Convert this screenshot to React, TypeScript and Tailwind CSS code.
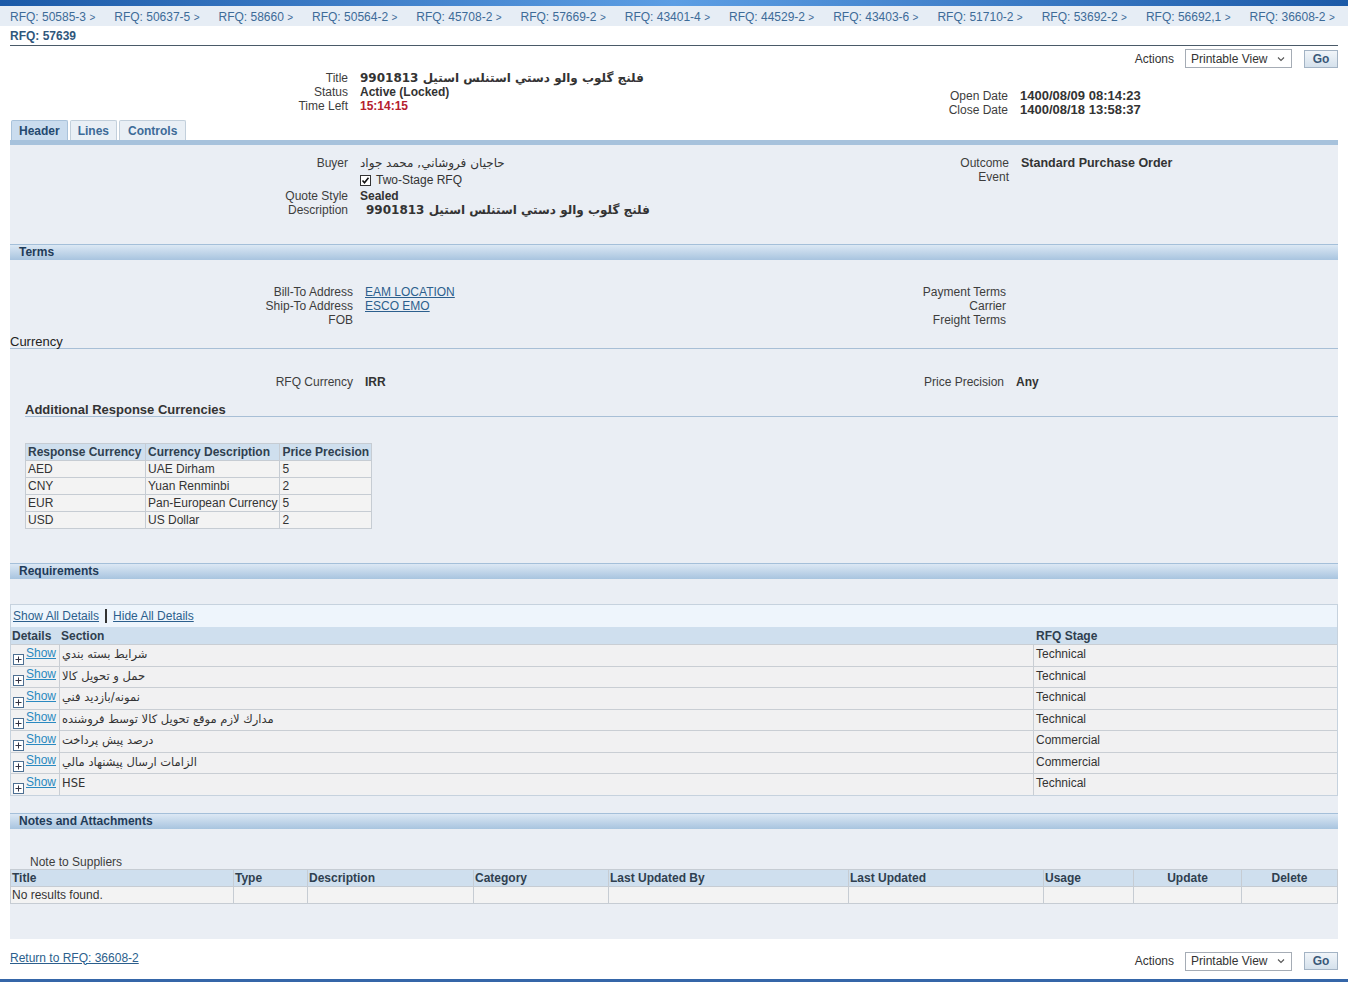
import React from 'react';

const crumbs = [
  '50585-3', '50637-5', '58660', '50564-2', '45708-2', '57669-2', '43401-4',
  '44529-2', '43403-6', '51710-2', '53692-2', '56692,1', '36608-2',
];

const currencies = [
  ['AED', 'UAE Dirham', '5'],
  ['CNY', 'Yuan Renminbi', '2'],
  ['EUR', 'Pan-European Currency', '5'],
  ['USD', 'US Dollar', '2'],
];

const reqs = [
  ['شرايط بسته بندي', 'Technical'],
  ['حمل و تحويل كالا', 'Technical'],
  ['نمونه/بازديد فني', 'Technical'],
  ['مدارك لازم موقع تحويل كالا توسط فروشنده', 'Technical'],
  ['درصد پيش پرداخت', 'Commercial'],
  ['الزامات ارسال پيشنهاد مالي', 'Commercial'],
  ['HSE', 'Technical'],
];

const Field = ({ label, w, children }: { label: string; w: string; children?: React.ReactNode }) => (
  <div className="flex h-[14px] items-center leading-[14px]">
    <div className={`${w} shrink-0 text-right text-[#3d3d3d]`}>{label}</div>
    <div className="whitespace-nowrap pl-[12px] text-[#333]">{children}</div>
  </div>
);

const SectionBar = ({ title }: { title: string }) => (
  <div className="h-[16px] border-t border-[#a4bfd9] bg-gradient-to-b from-[#dce8f4] to-[#a8c4df] pl-[9px] text-[12px] font-bold leading-[15px] text-[#1f3b58]">
    {title}
  </div>
);

const Actions = () => (
  <div className="flex items-center">
    <span className="mr-[11px] text-[#333]">Actions</span>
    <div className="flex h-[19px] w-[107px] items-center justify-between border border-[#a5acb5] bg-white pl-[5px] pr-[6px] text-[#333]">
      <span>Printable View</span>
      <svg width="8" height="6" viewBox="0 0 8 6"><path d="M1 1.5 L4 4.5 L7 1.5" fill="none" stroke="#555" strokeWidth="1.1" /></svg>
    </div>
    <div className="ml-[12px] flex h-[18px] w-[34px] items-center justify-center border border-[#a3b3c4] bg-gradient-to-b from-[#f1f5f9] to-[#d5e1ec] font-bold text-[#3a5878]">
      Go
    </div>
  </div>
);

const cell = 'border border-[#c6ccd3] px-[2px] whitespace-nowrap';

export default function App() {
  return (
    <div className="relative h-[982px] w-[1348px] overflow-hidden bg-white font-['Liberation_Sans','DejaVu_Sans',Arial,sans-serif] text-[12px] text-[#333]">
      {/* bandeau bleu */}
      <div className="h-[6px] bg-gradient-to-r from-[#1b5aa8] via-[#5c9ee4] to-[#1b5aa8]" />

      {/* fil d'ariane */}
      <div className="flex h-[20px] items-center gap-[19px] bg-[#e6edf5] pl-[10px] pt-[2px] text-[#3d6b98]">
        {crumbs.map((c) => (
          <span key={c} className="whitespace-nowrap">
            RFQ: {c} <span className="text-[10px]">&gt;</span>
          </span>
        ))}
      </div>

      <div className="mx-[10px] border-b border-[#4a5a68] pb-[2px] pt-[3px] text-[12px] font-bold leading-[14px] text-[#30577c]">
        RFQ: 57639
      </div>

      <div className="mx-[10px] flex justify-end pt-[3px]">
        <Actions />
      </div>

      {/* titre */}
      <div className="mx-[10px] mt-[3px] flex">
        <div className="w-[900px]">
          <Field label="Title" w="w-[338px]">
            <span className="font-['DejaVu_Sans',sans-serif] text-[12px] font-bold">فلنج گلوب والو دستي استنلس استيل 9901813</span>
          </Field>
          <Field label="Status" w="w-[338px]"><b>Active (Locked)</b></Field>
          <Field label="Time Left" w="w-[338px]"><b className="text-[#b5202e]">15:14:15</b></Field>
        </div>
        <div className="pt-[18px]">
          <Field label="Open Date" w="w-[98px]"><b className="text-[13px]">1400/08/09 08:14:23</b></Field>
          <Field label="Close Date" w="w-[98px]"><b className="text-[13px]">1400/08/18 13:58:37</b></Field>
        </div>
      </div>

      {/* onglets */}
      <div className="mx-[10px] mt-[3px] flex h-[20px] items-end gap-[2px] pl-[1px] font-bold">
        <div className="flex h-[20px] items-center rounded-t-[2px] border border-b-0 border-[#a9c2da] bg-[#cadcee] px-[7px] text-[#24496f]">Header</div>
        <div className="flex h-[20px] items-center rounded-t-[2px] border border-b-0 border-[#c2cfdb] bg-[#e9eff5] px-[7px] text-[#3d6b98]">Lines</div>
        <div className="flex h-[20px] items-center rounded-t-[2px] border border-b-0 border-[#c2cfdb] bg-[#e9eff5] px-[8px] text-[#3d6b98]">Controls</div>
      </div>
      <div className="mx-[10px] h-[5px] bg-[#a7c2dc]" />

      {/* panneau */}
      <div className="mx-[10px] bg-[#eaeef4] pb-[35px]">
        {/* en-tete */}
        <div className="flex pt-[11px]">
          <div className="w-[900px]">
            <Field label="Buyer" w="w-[338px]">
              <span className="font-['DejaVu_Sans',sans-serif]">حاجيان فروشاني, محمد جواد</span>
            </Field>
            <div className="flex h-[19px] items-end pl-[350px]">
              <div className="flex items-center gap-[5px]">
                <svg width="11" height="11" viewBox="0 0 11 11">
                  <rect x="0.5" y="0.5" width="10" height="10" fill="white" stroke="#333" />
                  <path d="M2.5 5.5 L4.5 7.8 L8.5 2.8" fill="none" stroke="#111" strokeWidth="1.6" />
                </svg>
                <span>Two-Stage RFQ</span>
              </div>
            </div>
            <Field label="Quote Style" w="w-[338px]"><b>Sealed</b></Field>
            <Field label="Description" w="w-[338px]">
              <span className="pl-[6px] font-['DejaVu_Sans',sans-serif] font-bold">فلنج گلوب والو دستي استنلس استيل 9901813</span>
            </Field>
          </div>
          <div>
            <Field label="Outcome" w="w-[99px]"><b className="text-[12.5px]">Standard Purchase Order</b></Field>
            <Field label="Event" w="w-[99px]" />
          </div>
        </div>

        {/* Terms */}
        <div className="mt-[27px]"><SectionBar title="Terms" /></div>
        <div className="flex pt-[25px]">
          <div className="w-[900px]">
            <Field label="Bill-To Address" w="w-[343px]"><span className="text-[#2c5f8d] underline">EAM LOCATION</span></Field>
            <Field label="Ship-To Address" w="w-[343px]"><span className="text-[#2c5f8d] underline">ESCO EMO</span></Field>
            <Field label="FOB" w="w-[343px]" />
          </div>
          <div>
            <Field label="Payment Terms" w="w-[96px]" />
            <Field label="Carrier" w="w-[96px]" />
            <Field label="Freight Terms" w="w-[96px]" />
          </div>
        </div>

        {/* Currency */}
        <div className="mt-[9px] border-b border-[#a8bfd6] text-[13px] leading-[12px] text-[#222]">Currency</div>
        <div className="flex pt-[26px]">
          <div className="w-[900px]">
            <Field label="RFQ Currency" w="w-[343px]"><b>IRR</b></Field>
          </div>
          <div>
            <Field label="Price Precision" w="w-[94px]"><b>Any</b></Field>
          </div>
        </div>
        <div className="ml-[15px] mt-[14px] border-b border-[#a8bfd6] text-[13px] font-bold leading-[13px] text-[#333]">
          Additional Response Currencies
        </div>

        <table className="ml-[15px] mt-[26px] border-collapse border border-[#c6ccd3] leading-[16px]">
          <thead>
            <tr className="bg-[#cfdfee] text-left text-[#2f3f50]">
              <th className={`${cell} w-[120px] font-bold`}>Response Currency</th>
              <th className={`${cell} w-[131px] font-bold`}>Currency Description</th>
              <th className={`${cell} w-[90px] font-bold`}>Price Precision</th>
            </tr>
          </thead>
          <tbody>
            {currencies.map((r) => (
              <tr key={r[0]} className="bg-[#f3f3f3]">
                {r.map((c, i) => (
                  <td key={i} className={cell}>{c}</td>
                ))}
              </tr>
            ))}
          </tbody>
        </table>

        {/* Requirements */}
        <div className="mt-[34px]"><SectionBar title="Requirements" /></div>
        <div className="mt-[25px] border border-[#c6d2de]">
          <div className="flex h-[22px] items-center bg-[#eef5fc] pl-[2px]">
            <span className="text-[#2c5f8d] underline">Show All Details</span>
            <span className="mx-[6px] h-[14px] w-[2px] bg-[#333]" />
            <span className="text-[#2c5f8d] underline">Hide All Details</span>
          </div>
          <div className="flex h-[17px] items-center bg-[#cfdfee] font-bold text-[#2f3f50]">
            <div className="w-[49px] pl-[1px]">Details</div>
            <div className="w-[974px] pl-[1px]">Section</div>
            <div className="pl-[2px]">RFQ Stage</div>
          </div>
          {reqs.map(([s, st], i) => (
            <div key={i} className="flex h-[21.5px] border-t border-[#c9ced4] bg-[#f1f1f2]">
              <div className="flex w-[49px] items-end gap-[2px] border-r border-[#c9ced4] pb-[2px] pl-[2px]">
                <svg width="11" height="11" viewBox="0 0 11 11" className="mb-[-1px]">
                  <rect x="0.5" y="0.5" width="10" height="10" fill="white" stroke="#4d6f92" />
                  <path d="M2.5 5.5 H8.5 M5.5 2.5 V8.5" stroke="#334" strokeWidth="1" />
                </svg>
                <span className="mb-[4px] leading-[14px] text-[#2a89c0] underline">Show</span>
              </div>
              <div className="w-[974px] border-r border-[#c9ced4] pl-[2px] pt-[2px] leading-[14px]">
                <span className="font-['DejaVu_Sans',sans-serif] text-[11.5px]">{s}</span>
              </div>
              <div className="pl-[2px] pt-[2px] leading-[14px]">{st}</div>
            </div>
          ))}
        </div>

        {/* Notes */}
        <div className="mt-[17px]"><SectionBar title="Notes and Attachments" /></div>
        <div className="mt-[26px] pl-[20px] leading-[14px] text-[#3d3d3d]">Note to Suppliers</div>
        <table className="w-full table-fixed border-collapse border border-[#c6ccd3] leading-[16px]">
          <thead>
            <tr className="bg-[#cfdfee] text-[#2f3f50]">
              <th className="w-[223px] border border-[#c6ccd3] px-[1px] text-left font-bold">Title</th>
              <th className="w-[74px] border border-[#c6ccd3] px-[1px] text-left font-bold">Type</th>
              <th className="w-[166px] border border-[#c6ccd3] px-[1px] text-left font-bold">Description</th>
              <th className="w-[135px] border border-[#c6ccd3] px-[1px] text-left font-bold">Category</th>
              <th className="w-[240px] border border-[#c6ccd3] px-[1px] text-left font-bold">Last Updated By</th>
              <th className="w-[195px] border border-[#c6ccd3] px-[1px] text-left font-bold">Last Updated</th>
              <th className="w-[90px] border border-[#c6ccd3] px-[1px] text-left font-bold">Usage</th>
              <th className="w-[108px] border border-[#c6ccd3] text-center font-bold">Update</th>
              <th className="border border-[#c6ccd3] text-center font-bold">Delete</th>
            </tr>
          </thead>
          <tbody>
            <tr className="bg-[#f3f3f3]">
              <td className="border border-[#c6ccd3] px-[1px]">No results found.</td>
              <td className="border border-[#c6ccd3]" />
              <td className="border border-[#c6ccd3]" />
              <td className="border border-[#c6ccd3]" />
              <td className="border border-[#c6ccd3]" />
              <td className="border border-[#c6ccd3]" />
              <td className="border border-[#c6ccd3]" />
              <td className="border border-[#c6ccd3]" />
              <td className="border border-[#c6ccd3]" />
            </tr>
          </tbody>
        </table>
      </div>

      {/* pied */}
      <div className="mx-[10px] flex items-start justify-between pt-[12px]">
        <span className="leading-[14px] text-[#2c5f8d] underline">Return to RFQ: 36608-2</span>
        <div className="mt-[1px]"><Actions /></div>
      </div>

      <div className="absolute bottom-0 left-0 h-[3px] w-full bg-[#3566a8]" />
    </div>
  );
}
